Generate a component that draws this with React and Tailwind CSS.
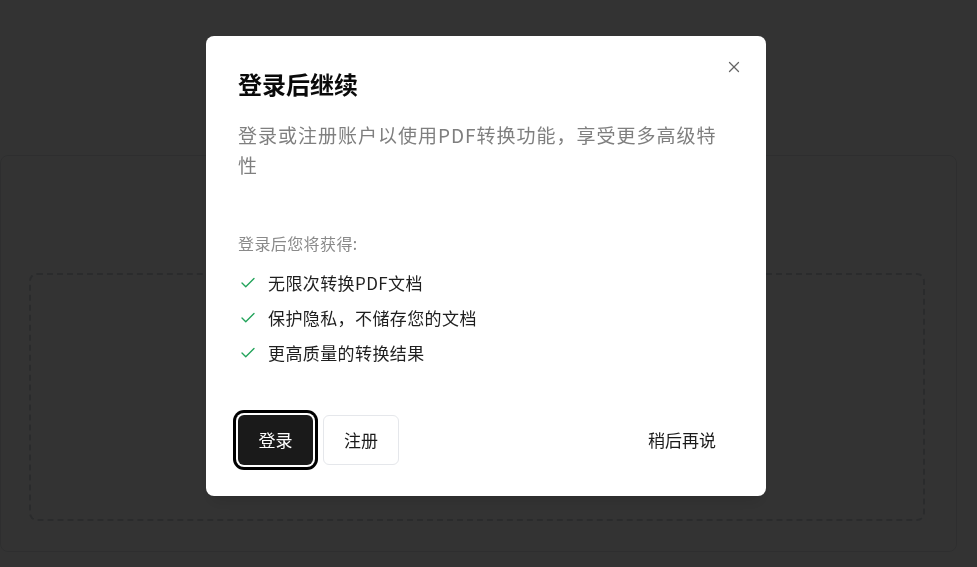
import React from 'react';
import { Check, X } from 'lucide-react';

const benefits = ['无限次转换PDF文档', '保护隐私，不储存您的文档', '更高质量的转换结果'];

export default function App() {
  return (
    <div
      className="relative min-h-screen w-full overflow-hidden bg-white"
      style={{ fontFamily: '"Noto Sans CJK SC", "Noto Sans", sans-serif' }}
    >
      {/* page underneath the overlay */}
      <div className="pt-[155px] pb-[15px]">
        <div className="w-[957px] h-[397px] rounded-lg border border-gray-200 bg-white pl-[28px] pr-[31px] pt-[117px]">
          <div className="h-[248px] rounded-lg border-2 border-dashed border-gray-300" />
        </div>
      </div>

      {/* overlay */}
      <div className="fixed inset-0 bg-black/80" />

      {/* dialog */}
      <div className="fixed left-[206px] top-[36px] w-[560px] rounded-lg bg-white px-8 pt-8 pb-[31px] shadow-lg">
        <button className="absolute right-[23px] top-[22px] text-[#555] opacity-90">
          <X size={18} strokeWidth={1.7} />
        </button>

        <h2 className="text-[24px] leading-8 font-bold text-[#0a0a0a]">登录后继续</h2>
        <p className="mt-5 max-w-[484px] text-[19px] leading-[30px] tracking-[1px] text-[#7f7f7f]">
          登录或注册账户以使用PDF转换功能，享受更多高级特性
        </p>

        <div className="mt-[51px] text-[16px] leading-6 tracking-[0.4px] text-[#8a8a8a]">登录后您将获得:</div>
        <ul className="mt-[15px] flex flex-col gap-[10px]">
          {benefits.map(b => (
            <li key={b} className="flex items-center gap-[11px] text-[17px] leading-[25px] tracking-[0.4px] text-[#1f1f1f]">
              <Check size={18} strokeWidth={1.8} className="ml-[1px] text-[#22a35a]" />
              {b}
            </li>
          ))}
        </ul>

        <div className="mt-[50px] flex items-center gap-[10px]">
          <button className="h-[50px] w-[75px] rounded-md bg-[#1a1a1a] text-[17px] text-white ring-[3px] ring-black ring-offset-2 ring-offset-white">
            登录
          </button>
          <button className="h-[50px] w-[76px] rounded-md border border-gray-200 bg-white text-[17px] text-[#1a1a1a]">
            注册
          </button>
          <button className="ml-auto h-[50px] px-[18px] text-[17px] text-[#1a1a1a]">稍后再说</button>
        </div>
      </div>
    </div>
  );
}
